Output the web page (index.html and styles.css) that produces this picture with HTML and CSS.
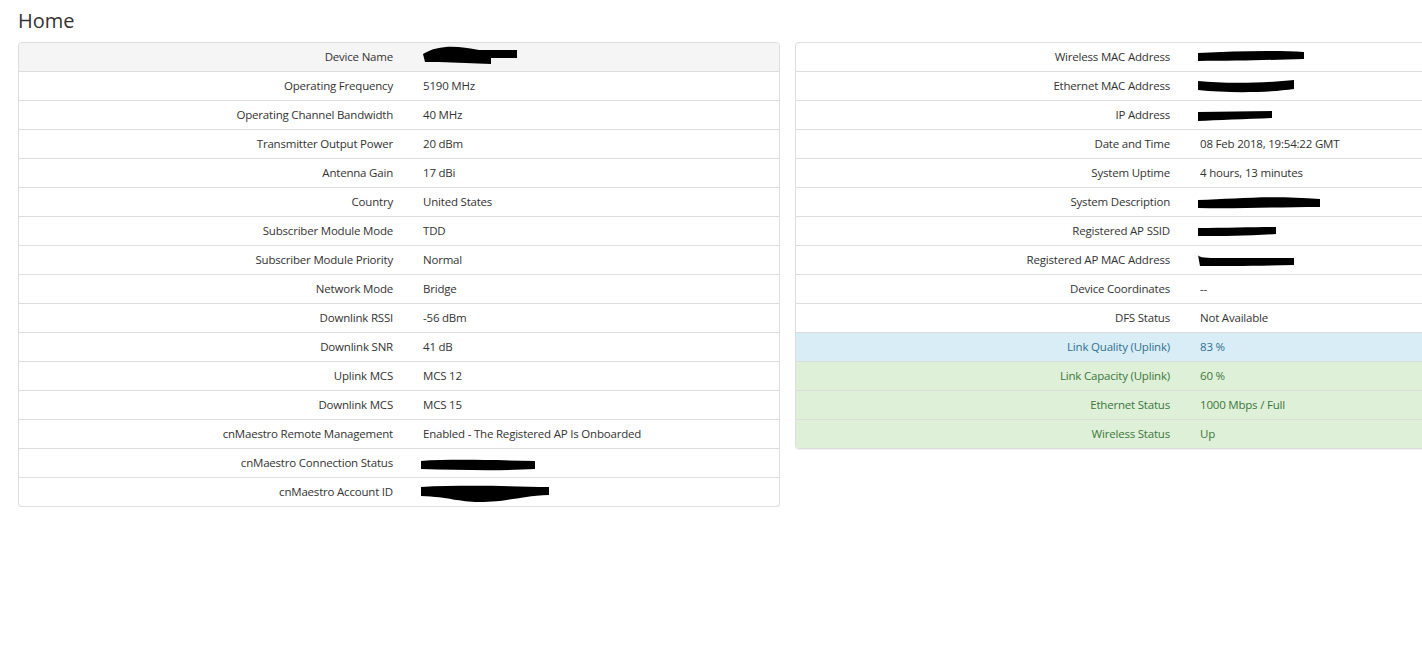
FILE: index.html
```html
<!DOCTYPE html>
<html lang="en">
<head>
    <meta charset="UTF-8">
    <title>Home</title>
    <link rel="stylesheet" href="styles.css">
</head>
<body>
    <h1 class="page-title">Home</h1>
    <div class="panels">
        <div class="panel">
            <table class="info-table">
                <tbody>
                    <tr class="head-row"><th>Device Name</th><td><svg class="redact r-name" viewBox="0 0 100 22"><path d="M4 9 C20 -1 40 1 60 5 L98 5 L98 13 L72 13 L72 19 L20 17 L6 17 Z" fill="#000"/></svg></td></tr>
                    <tr><th>Operating Frequency</th><td>5190 MHz</td></tr>
                    <tr><th>Operating Channel Bandwidth</th><td>40 MHz</td></tr>
                    <tr><th>Transmitter Output Power</th><td>20 dBm</td></tr>
                    <tr><th>Antenna Gain</th><td>17 dBi</td></tr>
                    <tr><th>Country</th><td>United States</td></tr>
                    <tr><th>Subscriber Module Mode</th><td>TDD</td></tr>
                    <tr><th>Subscriber Module Priority</th><td>Normal</td></tr>
                    <tr><th>Network Mode</th><td>Bridge</td></tr>
                    <tr><th>Downlink RSSI</th><td>-56 dBm</td></tr>
                    <tr><th>Downlink SNR</th><td>41 dB</td></tr>
                    <tr><th>Uplink MCS</th><td>MCS 12</td></tr>
                    <tr><th>Downlink MCS</th><td>MCS 15</td></tr>
                    <tr><th>cnMaestro Remote Management</th><td>Enabled - The Registered AP Is Onboarded</td></tr>
                    <tr><th>cnMaestro Connection Status</th><td><svg class="redact r-conn" viewBox="0 0 118 14"><path d="M2 3 C30 1 70 2 116 3 L116 11 C80 13 40 12 2 11 Z" fill="#000"/></svg></td></tr>
                    <tr><th>cnMaestro Account ID</th><td><svg class="redact r-acct" viewBox="0 0 132 18"><path d="M2 2 C40 0 90 1 130 2 L130 10 C100 11 90 17 60 17 C40 17 30 12 2 11 Z" fill="#000"/></svg></td></tr>
                </tbody>
            </table>
        </div>
        <div class="panel">
            <table class="info-table">
                <tbody>
                    <tr><th>Wireless MAC Address</th><td><svg class="redact r-wmac" viewBox="0 0 110 12"><path d="M2 3 C40 1 80 0 108 2 L108 9 C70 10 40 11 2 11 Z" fill="#000"/></svg></td></tr>
                    <tr><th>Ethernet MAC Address</th><td><svg class="redact r-emac" viewBox="0 0 100 14"><path d="M2 1 C30 4 70 3 98 0 L98 9 C70 13 30 13 2 10 Z" fill="#000"/></svg></td></tr>
                    <tr><th>IP Address</th><td><svg class="redact r-ip" viewBox="0 0 78 12"><path d="M2 2 L76 1 L76 8 C50 9 20 10 2 11 Z" fill="#000"/></svg></td></tr>
                    <tr><th>Date and Time</th><td>08 Feb 2018, 19:54:22 GMT</td></tr>
                    <tr><th>System Uptime</th><td>4 hours, 13 minutes</td></tr>
                    <tr><th>System Description</th><td><svg class="redact r-desc" viewBox="0 0 126 14"><path d="M2 4 C40 3 70 -1 124 3 L124 11 C80 11 40 13 2 12 Z" fill="#000"/></svg></td></tr>
                    <tr><th>Registered AP SSID</th><td><svg class="redact r-ssid" viewBox="0 0 82 10"><path d="M2 1 C30 1 60 0 80 0 L80 7 C50 9 30 9 2 9 Z" fill="#000"/></svg></td></tr>
                    <tr><th>Registered AP MAC Address</th><td><svg class="redact r-apmac" viewBox="0 0 100 12"><path d="M2 0 C3 4 20 3 50 3 L98 3 L98 10 C60 11 30 11 4 11 Z" fill="#000"/></svg></td></tr>
                    <tr><th>Device Coordinates</th><td>--</td></tr>
                    <tr><th>DFS Status</th><td>Not Available</td></tr>
                    <tr class="row-info"><th>Link Quality (Uplink)</th><td>83 %</td></tr>
                    <tr class="row-success"><th>Link Capacity (Uplink)</th><td>60 %</td></tr>
                    <tr class="row-success"><th>Ethernet Status</th><td>1000 Mbps / Full</td></tr>
                    <tr class="row-success"><th>Wireless Status</th><td>Up</td></tr>
                </tbody>
            </table>
        </div>
    </div>
</body>
</html>
```

FILE: styles.css
```css
html { overflow-x: hidden; }
body { margin: 0; padding: 0 0 0 18px; font-family: "Open Sans", "DejaVu Sans", sans-serif; font-size: 11.5px; letter-spacing: -0.2px; color: #333; background: #fff; }
.page-title { margin: 0; padding: 8px 0 0; font-size: 20px; font-weight: 400; letter-spacing: 0; line-height: 25px; height: 34px; color: #333; }
.panels { display: flex; align-items: flex-start; gap: 15px; width: 1540px; }
.panel { width: 760px; flex: none; border: 1px solid #ddd; border-radius: 4px; box-shadow: 0 1px 1px rgba(0,0,0,.06); overflow: hidden; background: #fff; }
.info-table { width: 100%; border-collapse: collapse; }
.info-table th, .info-table td { height: 28px; padding: 0 15px; border-top: 1px solid #ddd; line-height: 16px; vertical-align: middle; white-space: nowrap; }
.info-table tr:first-child th, .info-table tr:first-child td { border-top: none; }
.info-table th { width: 359px; text-align: right; font-weight: 400; }
.info-table td { text-align: left; }
.head-row th, .head-row td { background: #f5f5f5; }
.row-info th, .row-info td { background: #d9edf7; color: #31708f; }
.row-success th, .row-success td { background: #dff0d8; color: #3c763d; }
.redact { display: block; margin-left: -4px; }
.r-name { width: 100px; height: 22px; margin-top: -3px; }
.r-conn { width: 118px; height: 14px; margin-top: 4px; }
.r-acct { width: 132px; height: 18px; margin-top: 4px; }
.r-wmac { width: 110px; height: 12px; margin-top: -2px; }
.r-emac { width: 100px; height: 14px; margin-top: 2px; }
.r-ip { width: 78px; height: 12px; margin-top: 2px; }
.r-desc { width: 126px; height: 14px; margin-top: 2px; }
.r-ssid { width: 82px; height: 10px; margin-top: 2px; }
.r-apmac { width: 100px; height: 12px; margin-top: 2px; }
```
